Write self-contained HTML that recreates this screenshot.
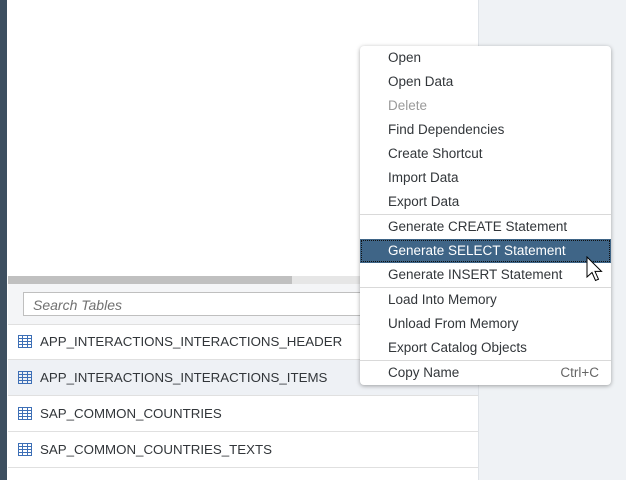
<!DOCTYPE html>
<html><head><style>
body{margin:0;width:626px;height:480px;position:relative;overflow:hidden;background:#fff;font-family:"Liberation Sans",sans-serif;}
.lb{position:absolute;left:0;top:0;width:7px;height:480px;background:#3d4f60;}
.rp{position:absolute;left:478px;top:0;width:148px;height:480px;background:#eff2f5;border-left:1px solid #dfe3e8;}
.sb{position:absolute;left:8px;top:276px;width:470px;height:8px;background:#e6e6e6;}
.sb div{width:284px;height:8px;background:#c0c0c0;}
.sa{position:absolute;left:8px;top:284px;width:470px;height:40px;background:#f4f5f7;border-bottom:1px solid #e0e0e0;}
.in{position:absolute;left:23px;top:292px;width:460px;height:24px;border:1px solid #bfbfbf;background:#fff;font-style:italic;color:#707070;font-size:14px;line-height:24px;padding-left:9px;box-sizing:border-box;}
.row{position:absolute;left:8px;width:470px;height:35px;border-bottom:1px solid #e0e0e0;font-size:13.3px;color:#32363a;line-height:35px;}
.row span{position:absolute;left:32px;}
.row svg{position:absolute;left:10px;top:11px;}
.m{position:absolute;left:360px;top:46px;width:251px;height:339px;background:#fff;border-radius:4px;box-shadow:0 1px 4px rgba(0,0,0,.35);font-size:13.5px;color:#32363a;}
.it{height:24px;line-height:24px;padding-left:28px;position:relative;}
.sep{border-top:1px solid #d9d9d9;}
.dis{color:#9a9a9a;}
.hl{background:#3f6587;color:#fff;outline:1px dotted #111;outline-offset:-2px;}
</style></head><body>
<div class="lb"></div>
<div class="rp"></div>
<div class="sb"><div></div></div>
<div class="sa"></div>
<div class="in">Search Tables</div>
<div class="row" style="top:324px"><svg width="14" height="13" viewBox="0 0 14 13"><rect x=".5" y=".5" width="13" height="12" fill="none" stroke="#3d6fb6"/><path d="M0 3.5h14M0 6.5h14M0 9.5h14M4.5 0v13M9.5 0v13" stroke="#3d6fb6"/></svg><span>APP_INTERACTIONS_INTERACTIONS_HEADER</span></div>
<div class="row" style="top:360px;background:#eef1f5"><svg width="14" height="13" viewBox="0 0 14 13"><rect x=".5" y=".5" width="13" height="12" fill="none" stroke="#3d6fb6"/><path d="M0 3.5h14M0 6.5h14M0 9.5h14M4.5 0v13M9.5 0v13" stroke="#3d6fb6"/></svg><span>APP_INTERACTIONS_INTERACTIONS_ITEMS</span></div>
<div class="row" style="top:396px"><svg width="14" height="13" viewBox="0 0 14 13"><rect x=".5" y=".5" width="13" height="12" fill="none" stroke="#3d6fb6"/><path d="M0 3.5h14M0 6.5h14M0 9.5h14M4.5 0v13M9.5 0v13" stroke="#3d6fb6"/></svg><span>SAP_COMMON_COUNTRIES</span></div>
<div class="row" style="top:432px"><svg width="14" height="13" viewBox="0 0 14 13"><rect x=".5" y=".5" width="13" height="12" fill="none" stroke="#3d6fb6"/><path d="M0 3.5h14M0 6.5h14M0 9.5h14M4.5 0v13M9.5 0v13" stroke="#3d6fb6"/></svg><span>SAP_COMMON_COUNTRIES_TEXTS</span></div>
<div class="m">
<div class="it">Open</div>
<div class="it">Open Data</div>
<div class="it dis">Delete</div>
<div class="it">Find Dependencies</div>
<div class="it">Create Shortcut</div>
<div class="it">Import Data</div>
<div class="it">Export Data</div>
<div class="it sep">Generate CREATE Statement</div>
<div class="it hl">Generate SELECT Statement</div>
<div class="it">Generate INSERT Statement</div>
<div class="it sep">Load Into Memory</div>
<div class="it">Unload From Memory</div>
<div class="it">Export Catalog Objects</div>
<div class="it sep">Copy Name<span style="position:absolute;right:12px;color:#666">Ctrl+C</span></div>
</div>
<svg style="position:absolute;left:586px;top:256px" width="20" height="28" viewBox="0 0 20 28"><path d="M1 1v20l5-4.5 3.5 8 3-1.3-3.5-7.8h6.5z" fill="#fff" stroke="#000" stroke-width="1"/></svg>
</body></html>
